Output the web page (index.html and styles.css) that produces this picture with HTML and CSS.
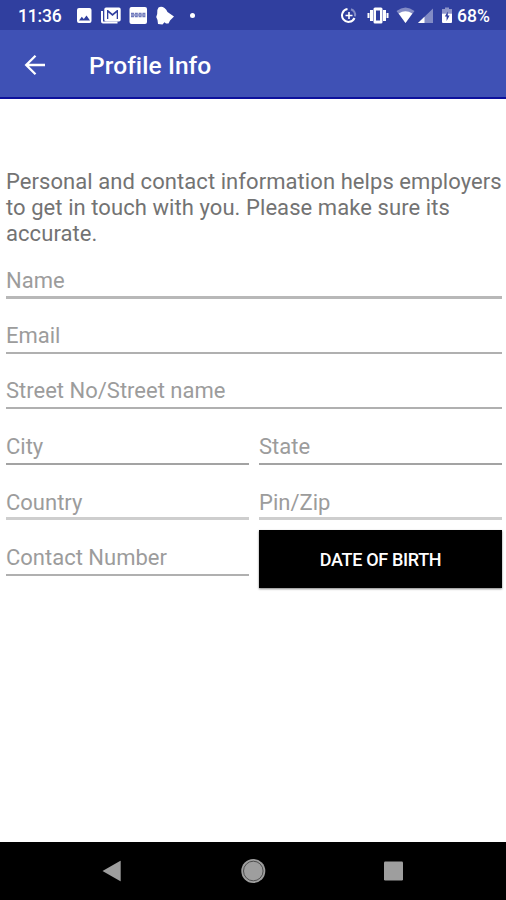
FILE: index.html
```
<!DOCTYPE html>
<html lang="en">
<head>
  <meta charset="UTF-8" />
  <meta name="viewport" content="width=device-width, initial-scale=1.0" />
  <title>Profile Info</title>
  <link rel="stylesheet" href="styles.css">
</head>
<body>
  <div class="status-bar">
    <span class="clock">11:36</span>
    <svg class="notifications" width="116" height="22" viewBox="76 5 116 22" fill="#fff">
      <!-- picture -->
      <path fill-rule="evenodd" d="M79 8h10.500q2 0 2 2v11q0 2-2 2H79q-2 0-2-2V10q0-2 2-2zM79 20.500h11l-3.500-5-2.700 3.500-2-2.200z"/>
      <!-- mail -->
      <path d="M101 11h2v10.500h14.500v2H103q-2 0-2-2z"/>
      <path fill-rule="evenodd" d="M106 7.500h13q1.700 0 1.700 1.700v10.600q0 1.700-1.700 1.700h-13q-1.700 0-1.700-1.700V9.200q0-1.700 1.700-1.700zM107 10v9h1.300v-6.500l4.200 3.500 4.200-3.500V19h1.300v-9h-1l-4.500 3.700-4.500-3.700z"/>
      <rect x="129.500" y="7" width="17.500" height="17" rx="2"/>
      <path d="M131 13.500h14.500M131 16.500h14.500" stroke="#303f9f" stroke-width="1.600" stroke-dasharray="3 .8" opacity=".7"/>
      <path d="M131 15h14.500" stroke="#303f9f" stroke-width="1.500" opacity=".6"/>
      <!-- bell -->
      <path d="M158.500 7.500q3-1.500 6 .5 2 1.500 3 4l6.500 4.500-4 4-1.500 3h-2.500l-1.500-1.200-2 2.200-4.500-.5-.5-4-1.300-3 1-3q-.7-4 1.300-6.500z"/>
    </svg>
    <span class="more-dot"></span>
    <svg class="system-icons" width="118" height="22" viewBox="340 5 118 22" fill="#fff">
      <!-- data saver -->
      <path d="M347.500 9A6.500 6.500 0 1 0 354.500 18" fill="none" stroke="#fff" stroke-width="2"/>
      <path d="M351 9.300a6.500 6.500 0 0 1 4 7" fill="none" stroke="#fff" stroke-width="2" opacity=".4"/>
      <path d="M348.200 12h1.600v2.700h2.700v1.600h-2.700v2.700h-1.600v-2.700h-2.700v-1.600h2.700z"/>
      <!-- vibrate -->
      <path fill-rule="evenodd" d="M375 7.500h6q1.500 0 1.500 1.500v13q0 1.500-1.500 1.500h-6q-1.500 0-1.500-1.500V9q0-1.500 1.500-1.500zM376 10.500v10h4v-10z"/>
      <path d="M370 10h3v11h-3zM383 10h3v11h-3zM367.500 13h2v5h-2zM386.500 13h2v5h-2z"/>
      <!-- wifi -->
      <path d="M396.500 11q9-7 18 0L405.500 23z" opacity=".4"/>
      <path d="M398.700 13.500q6.800-4.500 13.600 0L405.500 23z"/>
      <!-- signal -->
      <path d="M433 8.500V23h-15z" opacity=".4"/>
      <path d="M424.500 16.700V23H418z"/>
      <!-- battery -->
      <path d="M445 7.500h4v1.500h3v4.500h-10V9h3z" opacity=".45"/>
      <path d="M442 13.500h10V22q0 1-1 1h-8q-1 0-1-1z"/>
      <path d="M447.800 11.500l-3 5h1.800v4.500l3-5.500h-1.800z" fill="#303f9f"/>
    </svg>
    <span class="battery-level">68%</span>
  </div>

  <header class="app-bar">
    <svg class="back" width="22" height="22" viewBox="0 0 22 22" fill="none" stroke="#fff" stroke-width="2.300">
      <path d="M21 11H2.500M11.500 1.700 2.200 11l9.300 9.300"/>
    </svg>
    <h1 class="title">Profile Info</h1>
  </header>

  <main class="content">
    <p class="intro">Personal and contact information helps employers to get in touch with you. Please make sure its accurate.</p>
    <div class="form">
      <div class="field wide name"><span>Name</span></div>
      <div class="field wide"><span>Email</span></div>
      <div class="field wide"><span>Street No/Street name</span></div>
      <div class="field dark"><span>City</span></div>
      <div class="field dark"><span>State</span></div>
      <div class="field light"><span>Country</span></div>
      <div class="field light"><span>Pin/Zip</span></div>
      <div class="field"><span>Contact Number</span></div>
      <button class="dob" type="button">DATE OF BIRTH</button>
    </div>
  </main>

  <nav class="nav-bar">
    <svg width="22" height="26" viewBox="0 0 22 26" fill="#9e9e9e"><path d="M.5 13 18 2.900q.7-.3.700.5v19.300q0 .8-.7.400z"/></svg>
    <svg width="26" height="26" viewBox="0 0 26 26"><circle cx="13.300" cy="13" r="12" fill="#9e9e9e"/><circle cx="13.300" cy="13" r="9.800" fill="none" stroke="#444" stroke-width=".9"/></svg>
    <svg width="22" height="26" viewBox="0 0 22 26"><rect x="2" y="3.500" width="19" height="19" rx="1.200" fill="#9e9e9e"/></svg>
  </nav>
</body>
</html>
```
FILE: styles.css
```
* {
  box-sizing: border-box;
}
body {
  margin: 0;
  height: 900px;
  display: flex;
  flex-direction: column;
  background: #fff;
  font-family: Roboto, sans-serif;
  overflow: hidden;
}
svg {
  display: block;
  flex: none;
}

.status-bar {
  height: 30px;
  padding: 0 16px 0 18px;
  display: flex;
  align-items: center;
  background: #303f9f;
  color: #fff;
  font-size: 17.5px;
  font-weight: 500;
}
.clock {
  width: 58px;
  padding-top: 2px;
  letter-spacing: -0.2px;
}
.notifications {
  margin-top: 2px;
}
.more-dot {
  width: 5px;
  height: 5px;
  margin-top: 1px;
  margin-left: -2px;
  border-radius: 50%;
  background: #fff;
}
.system-icons {
  margin-left: 145px;
  margin-top: 2px;
}
.battery-level {
  margin-left: -1px;
  padding-top: 2px;
}

.app-bar {
  height: 69px;
  padding: 2px 24px 0;
  display: flex;
  align-items: center;
  gap: 43px;
  background: #3f51b5;
  border-bottom: 2px solid #0c109c;
  color: #fff;
}
.title {
  margin: 0;
  padding-top: 2px;
  font-size: 24.5px;
  font-weight: 500;
  letter-spacing: 0.08px;
}

.content {
  flex: 1;
  padding: 70px 4px 0 6px;
}
.intro {
  margin: 0 -4px 0 0;
  height: 79px;
  color: #737373;
  font-size: 22px;
  line-height: 26px;
  letter-spacing: 0.07px;
}

.form {
  display: grid;
  grid-template-columns: 243px 243px;
  grid-template-rows: 51px 55px 55px 56px 55px 56px;
  column-gap: 10px;
}
.field {
  display: flex;
  align-items: flex-end;
  padding-bottom: 3px;
  border-bottom: 2px solid #b0b0b0;
  color: #9c9c9c;
  font-size: 22px;
  line-height: 26px;
}
.wide {
  grid-column: span 2;
}
.name {
  padding-bottom: 2px;
  border-bottom: 3px solid #b8b8b8;
}
.dark {
  border-color: #a3a3a3;
}
.light {
  padding-bottom: 1px;
  border-bottom: 3px solid #cecece;
}
.dob {
  height: 58px;
  margin: 10px 0 0;
  padding: 0;
  border: 0;
  background: #000;
  color: #fff;
  box-shadow: 0 1px 2px rgba(0,0,0,0.5);
  font-family: inherit;
  font-size: 18px;
  font-weight: 500;
  letter-spacing: -0.33px;
}

.nav-bar {
  height: 58px;
  padding: 0 102px;
  display: flex;
  align-items: center;
  justify-content: space-between;
  background: #000;
}
```
